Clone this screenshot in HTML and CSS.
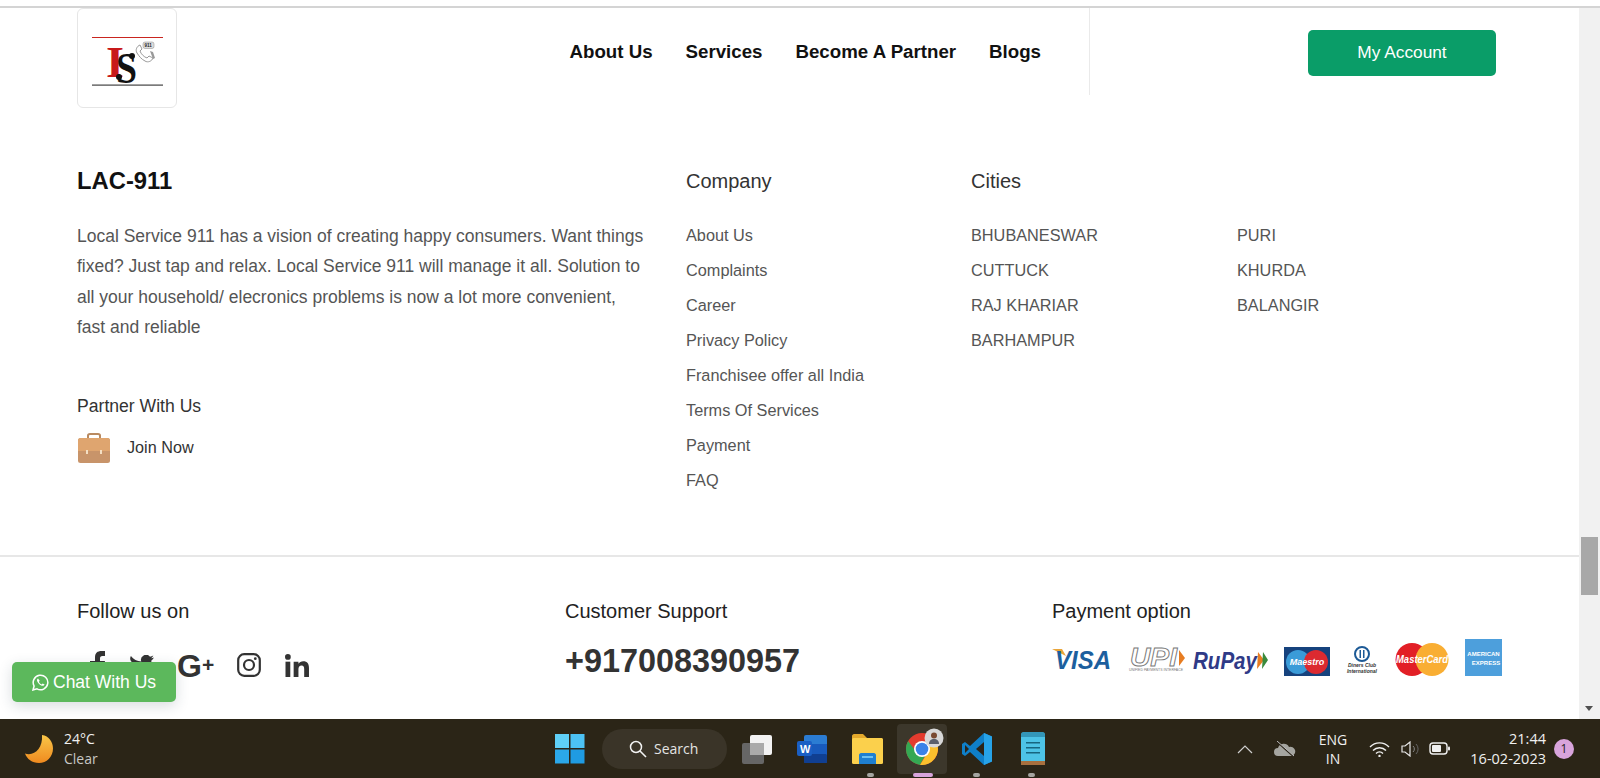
FILE: index.html
```html
<!DOCTYPE html>
<html lang="en">
<head>
    <meta charset="UTF-8">
    <meta name="viewport" content="width=device-width, initial-scale=1.0">
    <title>LAC-911</title>
    <link rel="stylesheet" href="styles.css">
</head>
<body>
<div class="screen">
    <div class="window">
        <div class="page">
            <header class="site-header">
                <div class="logo">
                    <svg width="98" height="98" viewBox="0 0 98 98">
                        <rect x="14" y="28" width="71" height="1" fill="#c9251f"/>
                        <rect x="14" y="75.500" width="71" height="1.200" fill="#444"/>
                        <text x="28" y="68" class="logo-i" textLength="18" lengthAdjust="spacingAndGlyphs">I</text>
                        <text x="38" y="74" class="logo-s" textLength="21" lengthAdjust="spacingAndGlyphs">S</text>
                        <circle cx="54" cy="47" r="3" fill="#111"/>
                        <circle cx="41" cy="68" r="3" fill="#111"/>
                        <path d="M59 44c-2-3 0-7 3-8l2 4-2 2c1 3 4 6 7 7l2-2 4 2c-1 3-5 5-8 3-4-2-6-5-8-8z" fill="none" stroke="#999" stroke-width="1"/>
                        <rect x="65" y="33" width="11" height="6.500" rx="2" fill="#ddd" stroke="#888" stroke-width=".5"/>
                        <text x="66.500" y="38.300" class="logo-911">911</text>
                        <path d="M72 42l3 8 2-1-2-6z" fill="#999"/>
                    </svg>
                </div>
                <nav class="main-nav">
                    <a>About Us</a>
                    <a>Services</a>
                    <a>Become A Partner</a>
                    <a>Blogs</a>
                </nav>
                <div class="account-box">
                    <a class="account-btn">My Account</a>
                </div>
            </header>

            <section class="footer-main">
                <div class="about-col">
                    <h2 class="brand">LAC-911</h2>
                    <p class="about-text">Local Service 911 has a vision of creating happy consumers. Want things fixed? Just tap and relax. Local Service 911 will manage it all. Solution to all your household/ elecronics problems is now a lot more convenient, fast and reliable</p>
                    <h4 class="partner-title">Partner With Us</h4>
                    <div class="join-row">
                        <svg width="34" height="32" viewBox="0 0 34 32">
                            <path d="M11 7V3.500C11 2.500 12 2 13 2h8c1 0 2 .5 2 1.500V7" fill="none" stroke="#b98a60" stroke-width="2"/>
                            <rect x="1" y="6" width="32" height="25" rx="2.500" fill="#c8946a"/>
                            <path d="M1 8.500C1 7 2 6 3.500 6h27C32 6 33 7 33 8.500V19H1z" fill="#dfa56f"/>
                            <rect x="9" y="18" width="2" height="4" fill="#f4dfc4"/>
                            <rect x="23" y="18" width="2" height="4" fill="#f4dfc4"/>
                        </svg>
                        <span>Join Now</span>
                    </div>
                </div>
                <div class="link-col">
                    <h3 class="col-title">Company</h3>
                    <ul class="link-list">
                        <li>About Us</li>
                        <li>Complaints</li>
                        <li>Career</li>
                        <li>Privacy Policy</li>
                        <li>Franchisee offer all India</li>
                        <li>Terms Of Services</li>
                        <li>Payment</li>
                        <li>FAQ</li>
                    </ul>
                </div>
                <div class="link-col">
                    <h3 class="col-title">Cities</h3>
                    <ul class="link-list city-list">
                        <li>BHUBANESWAR</li>
                        <li>PURI</li>
                        <li>CUTTUCK</li>
                        <li>KHURDA</li>
                        <li>RAJ KHARIAR</li>
                        <li>BALANGIR</li>
                        <li>BARHAMPUR</li>
                    </ul>
                </div>
            </section>

            <section class="footer-bottom">
                <div>
                    <h4 class="bottom-title">Follow us on</h4>
                    <div class="social-row">
                        <svg class="soc-f" width="16" height="28" viewBox="0 0 16 28"><path d="M5 28V15H0v-5h5V6.500C5 2 7.500 0 11.500 0H15v5h-2.500C10.500 5 10 6 10 7.500V10h5l-1 5h-4v13z" fill="#333"/></svg>
                        <svg class="soc-t" width="25" height="21" viewBox="0 0 25 21"><path d="M25 2.500c-1 .4-2 .7-3 .8 1-.6 1.900-1.600 2.300-2.800-1 .6-2.100 1-3.300 1.300A5 5 0 0 0 12.300 6.500C8.100 6.300 4.400 4.300 1.900.9c-1.400 2.400-.7 5.300 1.600 6.800-.8 0-1.600-.2-2.300-.6 0 2.500 1.700 4.500 4.100 5-.8.200-1.500.2-2.300.1.700 2 2.500 3.400 4.700 3.500A10 10 0 0 1 0 17.800 14.300 14.300 0 0 0 22.400 5.600c1-.8 1.900-1.900 2.600-3.100z" fill="#333"/></svg>
                        <span class="soc-g">G<small>+</small></span>
                        <svg class="soc-i" width="24" height="24" viewBox="0 0 24 24"><rect x="1.200" y="1.200" width="21.600" height="21.600" rx="6" fill="none" stroke="#333" stroke-width="2.200"/><circle cx="12" cy="12" r="5" fill="none" stroke="#333" stroke-width="2.200"/><circle cx="18.300" cy="5.700" r="1.400" fill="#333"/></svg>
                        <svg class="soc-l" width="24" height="23" viewBox="0 0 25 24"><circle cx="3" cy="3" r="3" fill="#333"/><rect x=".5" y="8" width="5" height="16" fill="#333"/><path d="M9 8h5v2.300C15 8.800 16.800 7.600 19 7.600c4.300 0 6 2.600 6 7V24h-5v-8.400c0-2.300-.7-3.700-2.700-3.700-2.200 0-3.300 1.500-3.300 3.800V24H9z" fill="#333"/></svg>
                    </div>
                </div>
                <div>
                    <h4 class="bottom-title">Customer Support</h4>
                    <div class="phone">+917008390957</div>
                </div>
                <div>
                    <h4 class="bottom-title">Payment option</h4>
                    <svg class="pay-logos" width="452" height="42" viewBox="0 0 452 42">
                        <path d="M0 12h10l4 7z" fill="#e9a53a"/>
                        <text x="3" y="32" class="pay-visa" textLength="56" lengthAdjust="spacingAndGlyphs">VISA</text>
                        <text x="78" y="29" class="pay-upi" textLength="47" lengthAdjust="spacingAndGlyphs">UPI</text>
                        <path d="M127 13l6 8-6 8z" fill="#e77d22"/>
                        <text x="77" y="34" class="pay-upi-sub" textLength="54" lengthAdjust="spacingAndGlyphs">UNIFIED PAYMENTS INTERFACE</text>
                        <text x="141" y="32" class="pay-rupay" textLength="64" lengthAdjust="spacingAndGlyphs">RuPay</text>
                        <path d="M206 15l6 8-7 9z" fill="#e77d22"/>
                        <path d="M211 15l5 8-6 9z" fill="#3a8a3c"/>
                        <rect x="232" y="10" width="46" height="29" fill="#16427d"/>
                        <circle cx="246" cy="25" r="12" fill="#3a9bd8"/>
                        <circle cx="264" cy="25" r="12" fill="#dc2a30"/>
                        <text x="255" y="28" class="pay-maestro">Maestro</text>
                        <circle cx="310" cy="17" r="7" fill="#fff" stroke="#1d5a96" stroke-width="2"/>
                        <rect x="307.500" y="13" width="1.500" height="8" fill="#1d5a96"/>
                        <rect x="311" y="13" width="1.500" height="8" fill="#1d5a96"/>
                        <text x="310" y="30" class="pay-diners">Diners Club</text>
                        <text x="310" y="36" class="pay-diners">International</text>
                        <circle cx="360" cy="22.500" r="16.500" fill="#e21f26"/>
                        <circle cx="380" cy="22.500" r="16.500" fill="#f9ae33"/>
                        <text x="370" y="26" class="pay-master" textLength="52" lengthAdjust="spacingAndGlyphs">MasterCard</text>
                        <rect x="413" y="2" width="37" height="37" fill="#4d9fdc"/>
                        <text x="431.500" y="19" class="pay-amex">AMERICAN</text>
                        <text x="434" y="28" class="pay-amex">EXPRESS</text>
                    </svg>
                </div>
            </section>
        </div>
        <div class="scrollbar">
            <div class="scroll-thumb"></div>
            <div class="scroll-arrow"></div>
        </div>
        <a class="chat-btn">
            <svg width="17" height="17" viewBox="0 0 17 17"><path d="M1 16l1.100-4A7.300 7.300 0 1 1 5 14.900z" fill="none" stroke="#fff" stroke-width="1.500"/><path d="M6 4.500c-1 .6-1.300 1.800-.7 3 .9 1.900 2.400 3.400 4.400 4.200 1.200.4 2.400 0 2.900-1.100l-2-1.100-.9 1c-1.300-.5-2.300-1.500-2.800-2.800l.8-.9z" fill="#fff"/></svg>
            Chat With Us
        </a>
    </div>

    <footer class="taskbar">
        <div class="weather">
            <svg width="30" height="30" viewBox="0 0 30 30">
                <defs><linearGradient id="moon" x1="0" y1="0" x2="0" y2="1"><stop offset="0" stop-color="#f9c648"/><stop offset="1" stop-color="#ef8a1f"/></linearGradient></defs>
                <path d="M18 1c7 1 11 7 11 13.500C29 23 22.500 29 15 29 8 29 3 25 1 19.500c9 3 18-5 17-18.500z" fill="url(#moon)"/>
            </svg>
            <div class="weather-text">
                <div class="temp">24°C</div>
                <div class="cond">Clear</div>
            </div>
        </div>
        <div class="task-icons">
            <svg class="ti-win" width="30" height="30" viewBox="0 0 30 30">
                <rect width="14" height="14" fill="#5fd0f8"/><rect x="15.500" width="14" height="14" fill="#4cc2f4"/>
                <rect y="15.500" width="14" height="14" fill="#2ba8ea"/><rect x="15.500" y="15.500" width="14" height="14" fill="#1f9be2"/>
            </svg>
            <div class="search-pill">
                <svg width="18" height="18" viewBox="0 0 18 18"><circle cx="7" cy="7" r="5.500" fill="none" stroke="#f2f2f2" stroke-width="1.500"/><path d="M11 11l6 6" stroke="#f2f2f2" stroke-width="1.600"/></svg>
                <span>Search</span>
            </div>
            <svg class="ti-view" width="30" height="30" viewBox="0 0 30 30">
                <rect x="0" y="9" width="22" height="21" rx="2" fill="#666"/>
                <rect x="8" y="1" width="22" height="20" rx="2" fill="#f2f2f2"/>
                <rect x="8" y="9" width="14" height="12" fill="#aaa"/>
            </svg>
            <svg class="ti-word" width="30" height="28" viewBox="0 0 30 28">
                <rect x="7" y="0" width="23" height="28" rx="2" fill="#2b7cd3"/>
                <rect x="7" y="9" width="23" height="10" fill="#185abd"/>
                <rect x="7" y="19" width="23" height="9" rx="1" fill="#103f91"/>
                <rect x="0" y="6" width="15" height="15" rx="2" fill="#1a5fc4"/>
                <text x="3" y="17.500" class="word-w">W</text>
            </svg>
            <svg class="ti-folder" width="31" height="30" viewBox="0 0 31 30">
                <path d="M0 2C0 1 1 0 2 0h9l4 4h14c1 0 2 1 2 2v4H0z" fill="#e3a92c"/>
                <rect y="4" width="31" height="26" rx="1.500" fill="#fbd04c"/>
                <path d="M7 21c0-1 1-2 2-2h13c1 0 2 1 2 2v9H7z" fill="#1f7fd0"/>
                <rect x="10" y="22" width="11" height="2" fill="#6cc0f0"/>
            </svg>
            <div class="chrome-box">
                <svg width="42" height="42" viewBox="0 0 42 42">
                    <circle cx="19" cy="21" r="16" fill="#e33b2e"/>
                    <path d="M5.100 13A16 16 0 0 0 17 36.900l6-11-8.400-.2z" fill="#34a853"/>
                    <path d="M33.800 15A16 16 0 0 1 17 36.900L25 24l-2-9z" fill="#fbc02d"/>
                    <circle cx="19" cy="21" r="8" fill="#fff"/>
                    <circle cx="19" cy="21" r="6.300" fill="#3b82e8"/>
                    <circle cx="31" cy="10" r="9.500" fill="#d8d8d8"/>
                    <circle cx="31" cy="7.500" r="3" fill="#7a4a32"/>
                    <path d="M26 16c0-3.500 2-5 5-5s5 1.500 5 5z" fill="#5a5f6c"/>
                </svg>
            </div>
            <svg class="ti-code" width="30" height="32" viewBox="0 0 30 32">
                <path d="M22 0l8 3.500v25L22 32 8 19l-5 4-3-2v-10l3-2 5 4z" fill="#0f7fc8"/>
                <path d="M22 9l-8 7 8 7z" fill="#2b2418"/>
                <path d="M3 12l4 4-4 4z" fill="#2b2418"/>
                <path d="M22 0l8 3.500v25L22 32z" fill="#27a3e8"/>
            </svg>
            <svg class="ti-note" width="24" height="34" viewBox="0 0 24 34">
                <rect y="1" width="24" height="30" rx="1.500" fill="#4dc3e6"/>
                <path d="M0 3c0-2 1-3 2-3h20c1 0 2 1 2 3v2H0z" fill="#3396b8"/>
                <rect y="29" width="24" height="4" fill="#a8703f"/>
                <g fill="#17657f"><rect x="5" y="10" width="14" height="1.500"/><rect x="5" y="15" width="14" height="1.500"/><rect x="5" y="20" width="14" height="1.500"/></g>
            </svg>
            <i class="dot dot-folder"></i>
            <i class="dot dot-chrome"></i>
            <i class="dot dot-code"></i>
            <i class="dot dot-note"></i>
        </div>
        <div class="tray">
            <svg class="tr-chev" width="16" height="10" viewBox="0 0 16 10"><path d="M1 9l7-7 7 7" fill="none" stroke="#cfcfcf" stroke-width="1.200"/></svg>
            <svg class="tr-cloud" width="22" height="16" viewBox="0 0 22 16"><path d="M4 15a4 4 0 0 1 0-8 6 6 0 0 1 11-1 4.500 4.500 0 0 1 3 9z" fill="#a5a5a0"/><path d="M2 0l18 16" stroke="#2b2418" stroke-width="1.500"/><path d="M3 0l17 15" stroke="#bbb" stroke-width="1"/></svg>
            <div class="lang">ENG<br>IN</div>
            <svg class="tr-wifi" width="21" height="16" viewBox="0 0 21 16"><g fill="none" stroke="#f0f0f0" stroke-width="1.400"><path d="M1 6a13 13 0 0 1 19 0"/><path d="M4 9.500a9 9 0 0 1 13 0"/><path d="M7 12.500a5 5 0 0 1 7 0"/></g><circle cx="10.500" cy="15" r="1.200" fill="#f0f0f0"/></svg>
            <svg class="tr-vol" width="20" height="16" viewBox="0 0 20 16"><path d="M1 5h3l5-4v14l-5-4H1z" fill="none" stroke="#e8e8e8" stroke-width="1.200"/><path d="M12 5a4 4 0 0 1 0 6" fill="none" stroke="#888" stroke-width="1"/><path d="M15 3a7 7 0 0 1 0 10" fill="none" stroke="#666" stroke-width="1"/></svg>
            <svg class="tr-batt" width="21" height="13" viewBox="0 0 21 13"><rect x="1" y="1" width="17" height="11" rx="3" fill="none" stroke="#f0f0f0" stroke-width="1.400"/><rect x="3" y="3" width="9" height="7" rx="1" fill="#f0f0f0"/><rect x="19" y="4.500" width="2" height="4" rx="1" fill="#f0f0f0"/></svg>
            <div class="clock">21:44<br>16-02-2023</div>
            <div class="notif">1</div>
        </div>
    </footer>
</div>
</body>
</html>
```

FILE: styles.css
```css
* {
    box-sizing: border-box;
}

html, body {
    margin: 0;
    padding: 0;
    height: 100%;
    overflow: hidden;
}

body {
    font-family: "Liberation Sans", Arial, sans-serif;
    background: #fff;
    color: #333;
}

.screen {
    display: flex;
    flex-direction: column;
    width: 1600px;
    height: 778px;
}

.window {
    position: relative;
    display: flex;
    flex: 1;
    min-height: 0;
    border-top: 2px solid #d4d4d4;
    margin-top: 6px;
}

.page {
    flex: 1;
    min-width: 0;
}

/* header */
.site-header {
    display: flex;
    height: 132px;
    padding: 0 83px 0 77px;
    align-items: flex-start;
}

.logo {
    width: 100px;
    height: 100px;
    border: 1px solid #e6e6e6;
    border-radius: 6px;
}

.logo svg {
    display: block;
}

.logo-i {
    font-family: "Liberation Serif", serif;
    font-size: 44px;
    font-weight: bold;
    fill: #c8191a;
}

.logo-s {
    font-family: "Liberation Serif", serif;
    font-size: 44px;
    font-weight: bold;
    fill: #111;
}

.logo-911 {
    font-family: "Liberation Sans", sans-serif;
    font-size: 4.500px;
    font-weight: bold;
    fill: #222;
}

.main-nav {
    display: flex;
    gap: 33px;
    margin-left: auto;
    padding: 33px 48px 0 0;
    font-size: 18.700px;
    font-weight: bold;
    color: #111;
}

.account-box {
    display: flex;
    justify-content: flex-end;
    width: 407px;
    height: 87px;
    padding-top: 22px;
    border-left: 1px solid #eaeaea;
}

.account-btn {
    display: block;
    width: 188px;
    height: 46px;
    line-height: 45px;
    text-align: center;
    font-size: 17.300px;
    color: #fff;
    background: #0a9d68;
    border-radius: 5px;
}

/* footer columns */
.footer-main {
    display: grid;
    grid-template-columns: 609px 285px 1fr;
    height: 417px;
    padding: 27px 83px 0 77px;
    border-bottom: 2px solid #e7e7e7;
}

.brand {
    margin: 0;
    font-size: 23.800px;
    line-height: 28px;
    color: #111;
}

.about-text {
    width: 568px;
    margin: 26px 0 0;
    font-size: 17.500px;
    line-height: 30.400px;
    color: #555;
}

.partner-title {
    margin: 53px 0 0;
    font-size: 17.600px;
    font-weight: normal;
    line-height: 20px;
}

.join-row {
    display: flex;
    align-items: center;
    gap: 16px;
    margin-top: 16px;
    font-size: 16.200px;
}

.col-title {
    margin: 1px 0 0;
    font-size: 20px;
    font-weight: normal;
    line-height: 26px;
}

.link-list {
    margin: 24px 0 0;
    padding: 0;
    list-style: none;
    font-size: 16.300px;
    line-height: 35px;
    color: #555;
}

.city-list {
    display: grid;
    grid-template-columns: 266px 1fr;
}

/* bottom row */
.footer-bottom {
    display: grid;
    grid-template-columns: 488px 487px 1fr;
    padding: 42px 0 0 77px;
}

.bottom-title {
    margin: 0;
    font-size: 20px;
    font-weight: normal;
    line-height: 24px;
    color: #222;
}

.social-row {
    display: flex;
    align-items: center;
    height: 28px;
    margin-top: 28px;
    padding-left: 13px;
}

.soc-t {
    margin-left: 23px;
}

.soc-g {
    margin-left: 23px;
    font-size: 32px;
    font-weight: bold;
    line-height: 28px;
}

.soc-g small {
    font-size: 21px;
    vertical-align: 5px;
}

.soc-i {
    margin-left: 23px;
}

.soc-l {
    margin-left: 24px;
}

.phone {
    margin-top: 19px;
    font-size: 32.400px;
    line-height: 38px;
    font-weight: bold;
}

.pay-logos {
    display: block;
    margin-top: 14px;
    overflow: visible;
}

.pay-visa {
    font: italic bold 26px "Liberation Sans", sans-serif;
    fill: #1c5f9e;
}

.pay-upi {
    font: italic bold 26px "Liberation Sans", sans-serif;
    fill: #fff;
    stroke: #777;
    stroke-width: .9px;
}

.pay-upi-sub {
    font: 3px "Liberation Sans", sans-serif;
    fill: #777;
}

.pay-rupay {
    font: italic bold 23px "Liberation Sans", sans-serif;
    fill: #2f3a87;
}

.pay-maestro {
    font: italic bold 9px "Liberation Sans", sans-serif;
    fill: #fff;
    text-anchor: middle;
}

.pay-diners {
    font: italic bold 5px "Liberation Sans", sans-serif;
    fill: #333;
    text-anchor: middle;
}

.pay-master {
    font: italic bold 10.500px "Liberation Sans", sans-serif;
    fill: #fff;
    text-anchor: middle;
}

.pay-amex {
    font: bold 6px "Liberation Sans", sans-serif;
    fill: #fff;
    text-anchor: middle;
}

/* scrollbar */
.scrollbar {
    position: relative;
    width: 21px;
    background: #f1f1f1;
}

.scroll-thumb {
    position: absolute;
    top: 529px;
    left: 2px;
    width: 17px;
    height: 58px;
    background: #a8a8a8;
}

.scroll-arrow {
    position: absolute;
    bottom: 8px;
    left: 6px;
    border-top: 5px solid #505050;
    border-left: 4.500px solid transparent;
    border-right: 4.500px solid transparent;
}

.chat-btn {
    position: absolute;
    left: 12px;
    top: 654px;
    display: flex;
    align-items: center;
    gap: 4px;
    width: 164px;
    height: 40px;
    padding-left: 20px;
    font-size: 17.500px;
    color: #fff;
    background: #5cb85c;
    border-radius: 5px;
    box-shadow: 0 4px 14px rgba(40, 60, 80, .18);
}

/* windows taskbar */
.taskbar {
    position: relative;
    display: flex;
    align-items: center;
    flex: none;
    height: 59px;
    background: #2b2517;
    font-family: "Open Sans", "Noto Sans", sans-serif;
    color: #f0f0f0;
}

.weather {
    display: flex;
    align-items: center;
    gap: 10px;
    width: 555px;
    padding-left: 24px;
}

.temp {
    font-size: 14px;
    line-height: 20px;
}

.cond {
    font-size: 14px;
    line-height: 20px;
    color: #c8c8c4;
}

.task-icons {
    position: relative;
    display: flex;
    align-items: center;
    height: 59px;
}

.search-pill {
    display: flex;
    align-items: center;
    gap: 7px;
    width: 125px;
    height: 40px;
    margin-left: 17px;
    padding-left: 27px;
    font-size: 14px;
    color: #e4e4e4;
    background: #3a3428;
    border-radius: 20px;
}

.ti-view {
    margin-left: 15px;
}

.ti-word {
    margin-left: 25px;
}

.ti-folder {
    margin-left: 25px;
}

.chrome-box {
    width: 50px;
    height: 50px;
    margin-left: 14px;
    padding: 4px 2px 4px 6px;
    background: #3c372b;
    border-radius: 4px;
}

.ti-code {
    margin-left: 15px;
}

.ti-note {
    margin-left: 29px;
}

.word-w {
    font: bold 11px "Liberation Sans", sans-serif;
    fill: #fff;
}

.dot {
    position: absolute;
    bottom: 1px;
    width: 7px;
    height: 4px;
    background: #a5a5a0;
    border-radius: 2px;
}

.dot-folder {
    left: 312px;
}

.dot-chrome {
    left: 358px;
    width: 20px;
    background: #d8a4dc;
}

.dot-code {
    left: 418px;
}

.dot-note {
    left: 473px;
}

.tray {
    display: flex;
    align-items: center;
    margin-left: auto;
    padding-right: 26px;
}

.tr-cloud {
    margin-left: 21px;
}

.lang {
    width: 60px;
    margin-left: 7px;
    text-align: center;
    font-size: 14px;
    line-height: 19px;
}

.tr-wifi {
    margin-left: 6px;
}

.tr-vol {
    margin-left: 11px;
}

.tr-batt {
    margin-left: 8px;
}

.clock {
    width: 96px;
    text-align: right;
    font-size: 14.500px;
    line-height: 20px;
}

.notif {
    width: 20px;
    height: 20px;
    margin-left: 8px;
    line-height: 20px;
    text-align: center;
    font-size: 12px;
    color: #222;
    background: #d8a4dc;
    border-radius: 50%;
}
```
